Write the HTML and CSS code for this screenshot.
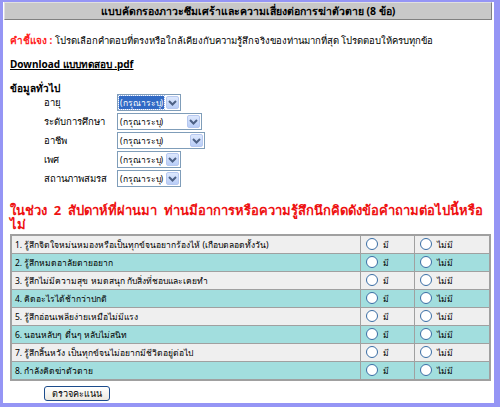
FILE: index.html
```html
<!DOCTYPE html>
<html lang="th">
<head>
<meta charset="utf-8">
<title>แบบคัดกรองภาวะซึมเศร้า</title>
<link rel="stylesheet" href="styles.css">
</head>
<body>
<div class="panel">
  <div class="header">แบบคัดกรองภาวะซึมเศร้าและความเสี่ยงต่อการฆ่าตัวตาย (8 ข้อ)</div>
  <div class="content">
    <p class="note"><span class="note-label">คำชี้แจง :</span> โปรดเลือกคำตอบที่ตรงหรือใกล้เคียงกับความรู้สึกจริงของท่านมากที่สุด โปรดตอบให้ครบทุกข้อ</p>
    <p class="download"><a href="#">Download แบบทดสอบ .pdf</a></p>
    <p class="section">ข้อมูลทั่วไป</p>
    <div class="fields">
      <div class="field"><span class="label">อายุ</span><span class="select w64"><span class="value focus">(กรุณาระบุ)</span><span class="arrow"><svg width="9" height="6" viewBox="0 0 9 6"><path d="M1 1 L4.5 4.5 L8 1" fill="none" stroke="#4d6185" stroke-width="2"/></svg></span></span></div>
      <div class="field"><span class="label">ระดับการศึกษา</span><span class="select w85"><span class="value">(กรุณาระบุ)</span><span class="arrow"><svg width="9" height="6" viewBox="0 0 9 6"><path d="M1 1 L4.5 4.5 L8 1" fill="none" stroke="#4d6185" stroke-width="2"/></svg></span></span></div>
      <div class="field"><span class="label">อาชีพ</span><span class="select w88"><span class="value">(กรุณาระบุ)</span><span class="arrow"><svg width="9" height="6" viewBox="0 0 9 6"><path d="M1 1 L4.5 4.5 L8 1" fill="none" stroke="#4d6185" stroke-width="2"/></svg></span></span></div>
      <div class="field"><span class="label">เพศ</span><span class="select w64"><span class="value">(กรุณาระบุ)</span><span class="arrow"><svg width="9" height="6" viewBox="0 0 9 6"><path d="M1 1 L4.5 4.5 L8 1" fill="none" stroke="#4d6185" stroke-width="2"/></svg></span></span></div>
      <div class="field"><span class="label">สถานภาพสมรส</span><span class="select w64"><span class="value">(กรุณาระบุ)</span><span class="arrow"><svg width="9" height="6" viewBox="0 0 9 6"><path d="M1 1 L4.5 4.5 L8 1" fill="none" stroke="#4d6185" stroke-width="2"/></svg></span></span></div>
    </div>
    <h2 class="question-title">ในช่วง&nbsp; 2&nbsp; สัปดาห์ที่ผ่านมา&nbsp; ท่านมีอาการหรือความรู้สึกนึกคิดดังข้อคำถามต่อไปนี้หรือ<br>ไม่</h2>
    <table class="quiz">
      <tr class="odd"><td class="q">1. รู้สึกจิตใจหม่นหมองหรือเป็นทุกข์จนอยากร้องไห้ (เกือบตลอดทั้งวัน)</td><td class="yes"><span class="radio"></span>มี</td><td class="no"><span class="radio"></span>ไม่มี</td></tr>
      <tr class="even"><td class="q">2. รู้สึกหมดอาลัยตายอยาก</td><td class="yes"><span class="radio"></span>มี</td><td class="no"><span class="radio"></span>ไม่มี</td></tr>
      <tr class="odd"><td class="q">3. รู้สึกไม่มีความสุข หมดสนุก กับสิ่งที่ชอบและเคยทำ</td><td class="yes"><span class="radio"></span>มี</td><td class="no"><span class="radio"></span>ไม่มี</td></tr>
      <tr class="even"><td class="q">4. คิดอะไรได้ช้ากว่าปกติ</td><td class="yes"><span class="radio"></span>มี</td><td class="no"><span class="radio"></span>ไม่มี</td></tr>
      <tr class="odd"><td class="q">5. รู้สึกอ่อนเพลียง่ายเหมือไม่มีแรง</td><td class="yes"><span class="radio"></span>มี</td><td class="no"><span class="radio"></span>ไม่มี</td></tr>
      <tr class="even"><td class="q">6. นอนหลับๆ ตื่นๆ หลับไม่สนิท</td><td class="yes"><span class="radio"></span>มี</td><td class="no"><span class="radio"></span>ไม่มี</td></tr>
      <tr class="odd"><td class="q">7. รู้สึกสิ้นหวัง เป็นทุกข์จนไม่อยากมีชีวิตอยู่ต่อไป</td><td class="yes"><span class="radio"></span>มี</td><td class="no"><span class="radio"></span>ไม่มี</td></tr>
      <tr class="even"><td class="q">8. กำลังคิดฆ่าตัวตาย</td><td class="yes"><span class="radio"></span>มี</td><td class="no"><span class="radio"></span>ไม่มี</td></tr>
    </table>
    <div class="actions"><button class="btn" type="button">ตรวจคะแนน</button></div>
  </div>
</div>
</body>
</html>
```
FILE: styles.css
```css
html, body {
  margin: 0;
  padding: 0;
  background: #9595f5;
  height: 407px;
  overflow: hidden;
}
body {
  font-family: Tahoma, "Noto Sans", "DejaVu Sans", sans-serif;
  font-size: 9.5px;
  color: #000;
  padding: 2px 6px 0 3px;
  box-sizing: border-box;
}
.panel {
  background: #fff;
  height: 401px;
  padding: 0 2px 0 1px;
  overflow: hidden;
}
.header {
  background: #c8c8c8;
  border-top: 1px solid #e0e0e0;
  border-left: 1px solid #e0e0e0;
  border-right: 1px solid #808080;
  border-bottom: 1px solid #808080;
  height: 16px;
  line-height: 16px;
  text-align: center;
  font-weight: bold;
  font-size: 10.5px;
  white-space: nowrap;
  overflow: hidden;
}
.content {
  padding: 0 0 0 6px;
}
p {
  margin: 0;
  white-space: nowrap;
}
.note {
  margin-top: 12px;
  height: 24px;
  line-height: 16px;
}
.note-label {
  color: #ff1f1f;
  font-weight: bold;
  font-size: 10px;
}
.download {
  height: 24px;
  line-height: 16px;
  font-weight: bold;
  font-size: 10px;
}
.download a {
  color: #000;
  text-decoration: underline;
}
.section {
  font-weight: bold;
  font-size: 10px;
  line-height: 16px;
  height: 14px;
}
.fields {
  display: flex;
  flex-direction: column;
  gap: 2px;
  padding-left: 34px;
}
.field {
  display: flex;
  align-items: center;
  height: 17px;
  white-space: nowrap;
}
.label {
  width: 73px;
  flex: 0 0 73px;
}
.select {
  display: flex;
  align-items: stretch;
  height: 15px;
  border: 1px solid #7f9db9;
  background: #fff;
  box-sizing: content-box;
  font-size: 8.5px;
}
.w64 { width: 62px; }
.w85 { width: 83px; }
.w88 { width: 86px; }
.value {
  flex: 1;
  margin: 1px;
  padding: 0 1px;
  line-height: 13px;
  white-space: nowrap;
  overflow: hidden;
}
.value.focus {
  flex: 0 0 auto;
  background: #316ac5;
  color: #fff;
  outline: 1px dotted #a0b8e8;
  margin-right: auto;
}
.arrow {
  width: 13px;
  flex: 0 0 13px;
  margin: 1px;
  background: linear-gradient(#dde8fd, #b9cdf7);
  border: 1px solid #b6c8f0;
  border-radius: 2px;
  box-sizing: border-box;
  display: flex;
  align-items: center;
  justify-content: center;
}
.question-title {
  margin: 16px 0 0 0;
  font-size: 13px;
  line-height: 14px;
  height: 28px;
  color: #ee1111;
  font-weight: bold;
  white-space: nowrap;
}
.quiz {
  margin-top: 3px;
  width: 481px;
  border-collapse: collapse;
  border: 2px solid #a0a0a0;
}
.quiz td {
  border: 1px solid #a0a0a0;
  height: 17px;
  padding: 0 0 0 3px;
  line-height: 16px;
  white-space: nowrap;
  font-size: 8.5px;
}
.quiz tr.odd td { background: #efefef; }
.quiz tr.even td { background: #a2dede; }
.quiz td.yes { width: 48px; padding-left: 5px; }
.quiz td.no { width: 69px; padding-left: 5px; }
.radio {
  display: inline-block;
  width: 10px;
  height: 10px;
  border: 1px solid #3a6ea5;
  border-radius: 50%;
  background: #fff;
  vertical-align: -2px;
  margin-right: 5px;
}
.actions {
  padding: 5px 0 0 34px;
}
.btn {
  font-family: Tahoma, "Noto Sans", "DejaVu Sans", sans-serif;
  font-size: 9px;
  width: 66px;
  height: 15px;
  padding: 0;
  line-height: 12px;
  border: 1px solid #1c4c8c;
  border-radius: 3px;
  background: linear-gradient(#ffffff, #ece9e0);
  color: #000;
  display: block;
}
```
